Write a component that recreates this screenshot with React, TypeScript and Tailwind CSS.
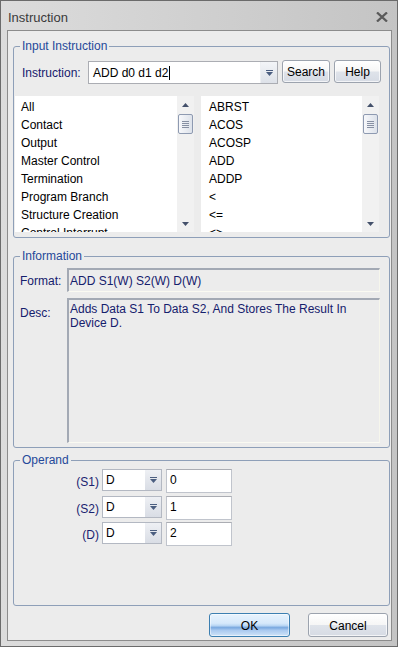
import React from "react";

const DropIcon = () => (
  <svg width="7" height="6" viewBox="0 0 7 6" className="block">
    <rect x="0" y="0" width="7" height="1" fill="#4b5e80" />
    <path d="M0 2H7L3.5 6Z" fill="#4b5e80" />
  </svg>
);

const ScrollBar = () => (
  <div className="w-[17px] h-full bg-[#f1f1f1] flex flex-col items-center">
    <div className="h-[17px] w-full flex items-center justify-center">
      <svg width="7" height="4" viewBox="0 0 7 4" className="block">
        <path d="M3.5 0L7 4H0Z" fill="#44516b" />
      </svg>
    </div>
    <div className="mt-px w-[15px] h-[20px] rounded-[2px] border border-[#8e9ab1] bg-gradient-to-r from-[#f7f8fb] to-[#dde2ea] flex flex-col items-center justify-center gap-[1px]">
      <div className="w-[7px] h-px bg-[#8790a3]" />
      <div className="w-[7px] h-px bg-[#8790a3]" />
      <div className="w-[7px] h-px bg-[#8790a3]" />
      <div className="w-[7px] h-px bg-[#8790a3]" />
    </div>
    <div className="flex-1" />
    <div className="h-[17px] w-full flex items-center justify-center">
      <svg width="7" height="4" viewBox="0 0 7 4" className="block">
        <path d="M0 0H7L3.5 4Z" fill="#44516b" />
      </svg>
    </div>
  </div>
);

const List = ({ items, cls, pad }: { items: string[]; cls: string; pad: string }) => (
  <div className={cls}>
    <div className="flex-1 bg-white overflow-hidden pt-[2px]">
      {items.map((it, i) => (
        <div key={i} className={`h-[18px] leading-[18px] whitespace-nowrap text-black ${pad}`}>
          {it}
        </div>
      ))}
    </div>
    <ScrollBar />
  </div>
);

const GrayBtn = ({ label, cls }: { label: string; cls: string }) => (
  <div
    className={`${cls} rounded-[3px] border border-[#9ca3ae] bg-[linear-gradient(to_bottom,#ffffff_0%,#f6f6f6_48%,#dfe3ea_52%,#d6dbe4_100%)] shadow-[inset_0_0_0_1px_rgba(255,255,255,0.7)] flex items-center justify-center pt-px text-black`}
  >
    {label}
  </div>
);

const Legend = ({ text }: { text: string }) => (
  <legend className="ml-[6px] px-[2px] leading-[14px] text-[#25499a]">{text}</legend>
);

const OperandRow = ({ label, value, cls }: { label: string; value: string; cls: string }) => (
  <div className={`flex items-start h-[24px] ${cls}`}>
    <div className="w-[85px] text-right leading-[26px] text-[#1a2370]">{label}</div>
    <div className="ml-[3px] w-[60px] h-[22px] bg-white border border-[#b3b8c2] flex">
      <div className="flex-1 pl-[3px] leading-[21px] text-black">D</div>
      <div className="w-[16px] h-full bg-gradient-to-b from-[#eef0f4] to-[#d9dde5] flex items-center justify-center">
        <DropIcon />
      </div>
    </div>
    <div className="ml-[4px] w-[66px] h-[24px] bg-white border border-[#c0c4cc] border-t-[#abadb3] pl-[3px] leading-[20px] text-black">
      {value}
    </div>
  </div>
);

export default function App() {
  return (
    <div className="w-[398px] h-[647px] border border-[#6b6b6b] bg-gradient-to-r from-[#dcdcdc] to-[#c4c4c4] flex flex-col font-['Liberation_Sans',Arial,sans-serif] text-[12px] leading-[14px] select-none">
      <div className="h-[29px] flex items-center justify-between pl-[7px] pr-[9px] pt-[4px]">
        <span className="text-[13px] text-[#3a3a3a]">Instruction</span>
        <svg width="12" height="10" viewBox="0 0 12 10" className="block -mt-[2px]">
          <path d="M1 0.5L11 9.5M11 0.5L1 9.5" stroke="#5a5a5a" strokeWidth="2.3" />
        </svg>
      </div>
      <div className="flex-1 ml-[6px] mr-[5px] mb-[5px] border border-[#8c8c8c] bg-[#ececec] flex flex-col">
        {/* Input Instruction */}
        <fieldset className="ml-[5px] mt-[8px] w-[377px] border border-[#8e9fb8] rounded-[3px] pt-[7px] pb-[5px]">
          <Legend text="Input Instruction" />
          <div className="flex items-start h-[24px]">
            <div className="w-[74px] pl-[8px] leading-[26px] text-[#15206c]">Instruction:</div>
            <div className="mt-[1px] w-[190px] h-[23px] bg-white border border-[#abadb3] flex">
              <div className="flex-1 flex items-center pl-[4px] pt-px text-black">
                ADD d0 d1 d2<span className="ml-[1px] w-px h-[14px] bg-black" />
              </div>
              <div className="w-[17px] h-full bg-gradient-to-b from-[#f3f5f8] to-[#dde1e8] border-l border-[#eef0f3] flex items-center justify-center">
                <DropIcon />
              </div>
            </div>
            <GrayBtn label="Search" cls="ml-[4px] w-[48px] h-[23px]" />
            <GrayBtn label="Help" cls="ml-[4px] w-[47px] h-[23px]" />
          </div>
          <div className="mt-[12px] flex pl-px">
            <List
              cls="flex w-[179px] h-[136px]"
              pad="pl-[6px]"
              items={[
                "All",
                "Contact",
                "Output",
                "Master Control",
                "Termination",
                "Program Branch",
                "Structure Creation",
                "Control Interrupt",
              ]}
            />
            <List
              cls="ml-[7px] flex w-[178px] h-[136px]"
              pad="pl-[8px]"
              items={["ABRST", "ACOS", "ACOSP", "ADD", "ADDP", "<", "<=", "<>"]}
            />
          </div>
        </fieldset>

        {/* Information */}
        <fieldset className="ml-[5px] mt-[11px] w-[377px] border border-[#8e9fb8] rounded-[3px] pt-[5px] pb-[4px]">
          <Legend text="Information" />
          <div className="flex items-center h-[24px] pl-[6px]">
            <div className="w-[47px] pt-px text-[#15206c]">Format:</div>
            <div className="w-[313px] h-[24px] border-t-2 border-l-2 border-b border-r border-t-[#a3a9b4] border-l-[#a3a9b4] border-b-[#fafaf2] border-r-[#f6f6ec] bg-[#ececec] pl-px leading-[22px] text-[#15206c]">
              ADD S1(W) S2(W) D(W)
            </div>
          </div>
          <div className="mt-[6px] flex items-start pl-[6px]">
            <div className="w-[47px] pt-[8px] text-[#15206c]">Desc:</div>
            <div className="w-[313px] h-[145px] border-t-2 border-l-2 border-b border-r border-t-[#a3a9b4] border-l-[#a3a9b4] border-b-[#fafaf2] border-r-[#f6f6ec] bg-[#ececec] pl-px pt-[2px] text-[#15206c]">
              Adds Data S1 To Data S2, And Stores The Result In
              <br />
              Device D.
            </div>
          </div>
        </fieldset>

        {/* Operand */}
        <fieldset className="ml-[5px] mt-[5px] w-[377px] border border-[#8e9fb8] rounded-[3px] pt-[2px] pb-[59px]">
          <Legend text="Operand" />
          <OperandRow label="(S1)" value="0" cls="" />
          <OperandRow label="(S2)" value="1" cls="mt-[3px]" />
          <OperandRow label="(D)" value="2" cls="mt-[2px]" />
        </fieldset>

        <div className="mt-[7px] flex justify-end mr-[3px]">
          <div className="w-[81px] h-[24px] rounded-[3px] border border-[#3c7fb1] bg-[linear-gradient(to_bottom,#e8f3fd_0%,#d6e9fb_42%,#bcd8f5_52%,#7aa9e0_62%,#a9c9ef_74%,#cfe3f8_100%)] shadow-[inset_0_0_0_1px_rgba(255,255,255,0.5)] flex items-center justify-center pt-px text-black">
            OK
          </div>
          <GrayBtn label="Cancel" cls="ml-[18px] w-[80px] h-[24px]" />
        </div>
      </div>
    </div>
  );
}
